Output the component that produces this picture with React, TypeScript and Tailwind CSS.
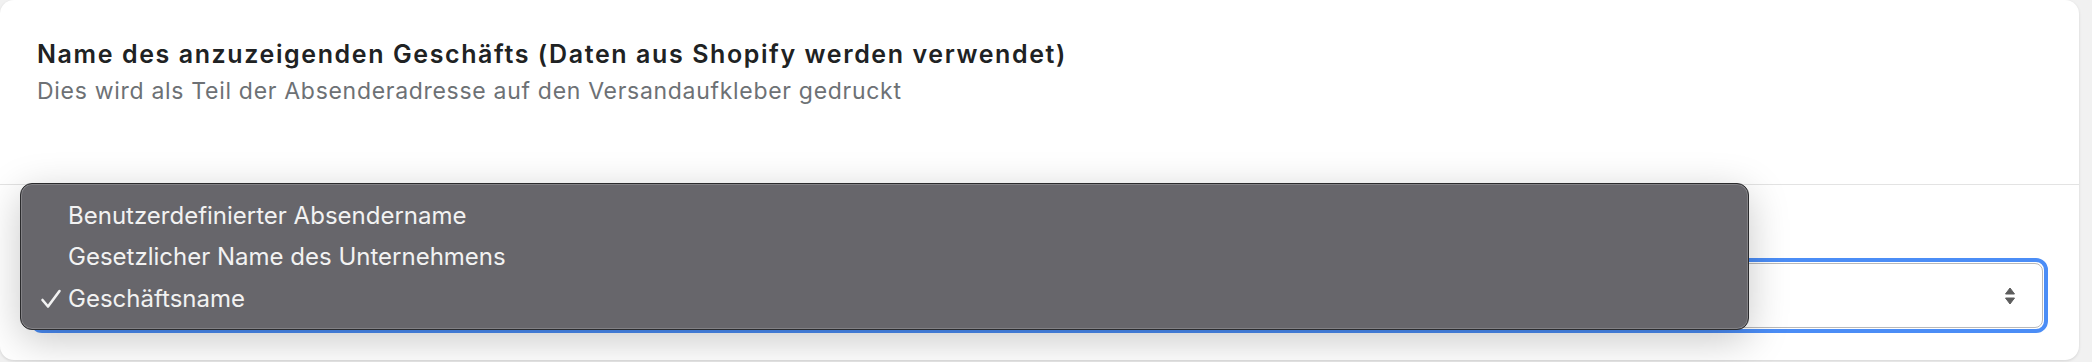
import React from 'react';

const options = [
  { label: 'Benutzerdefinierter Absendername', checked: false },
  { label: 'Gesetzlicher Name des Unternehmens', checked: false },
  { label: 'Geschäftsname', checked: true },
];

const SelectArrows: React.FC = () => (
  <svg width="12" height="18" viewBox="0 0 12 18" className="text-[#5c5c5c]">
    <path d="M6 1 L10.5 7 L1.5 7 Z" fill="currentColor" strokeLinejoin="round" stroke="currentColor" strokeWidth="1" />
    <path d="M6 17 L10.5 11 L1.5 11 Z" fill="currentColor" strokeLinejoin="round" stroke="currentColor" strokeWidth="1" />
  </svg>
);

const Check: React.FC = () => (
  <svg width="22" height="20" viewBox="0 0 22 20" fill="none">
    <path d="M2.5 11 L8 17.5 L19.5 2" stroke="#f2f2f2" strokeWidth="2.6" strokeLinecap="round" strokeLinejoin="round" />
  </svg>
);

export default function App() {
  return (
    <div className="h-[362px] w-full bg-[#f1f1f1] font-['Inter','Noto_Sans',sans-serif] overflow-hidden">
      <div className="relative w-[2079px] h-[360px] bg-white rounded-[14px] shadow-[0_1px_3px_rgba(0,0,0,0.12)]">
        {/* Header section */}
        <div className="h-[185px] border-b border-[#e3e3e3] px-[37px] pt-[38px]">
          <h2 className="text-[25px] leading-8 font-semibold tracking-[1.6px] text-[#202223]">
            Name des anzuzeigenden Geschäfts (Daten aus Shopify werden verwendet)
          </h2>
          <p className="mt-[5px] text-[23px] leading-8 tracking-[0.7px] text-[#6d7175]">
            Dies wird als Teil der Absenderadresse auf den Versandaufkleber gedruckt
          </p>
        </div>

        {/* Select section */}
        <div className="pl-[30px] pr-[31px] pt-[73px]">
          <div className="border-4 border-[#4b8df6] rounded-[12px] p-px">
            <div className="h-[65px] border border-[#b9b9b9] rounded-[8px] flex items-center justify-end pr-[26px] text-[22px] text-[#202223]">
              <SelectArrows />
            </div>
          </div>
        </div>

        {/* Open dropdown menu */}
        <div className="absolute left-[20px] top-[183px] w-[1729px] h-[147px] bg-[#67666b] rounded-[12px] border border-[#2b2b2d] shadow-[inset_0_0_0_1px_rgba(255,255,255,0.18),0_10px_40px_rgba(0,0,0,0.22)] pt-[11px]">
          {options.map((o) => (
            <div key={o.label} className="h-[41.5px] flex items-center text-[24px] text-[#f2f2f2]">
              <span className="w-[47px] flex justify-end pr-[6px]">{o.checked && <Check />}</span>
              <span>{o.label}</span>
            </div>
          ))}
        </div>
      </div>
    </div>
  );
}
